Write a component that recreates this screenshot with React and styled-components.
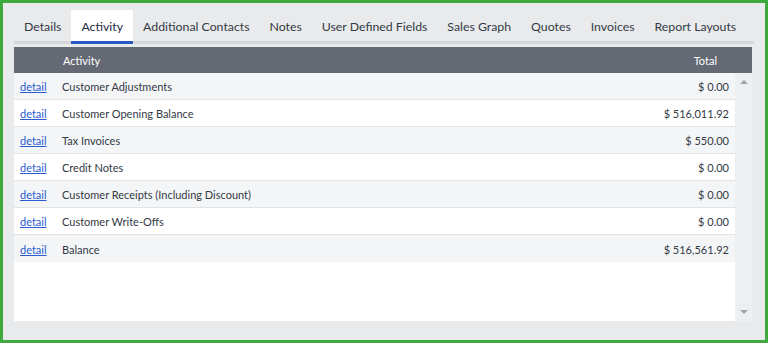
import React from 'react';
import styled, { createGlobalStyle } from 'styled-components';

const GlobalStyle = createGlobalStyle`
  html, body {
    margin: 0;
    padding: 0;
  }
  body {
    font-family: Lato, "Open Sans", sans-serif;
  }
  * {
    box-sizing: border-box;
  }
`;

const Frame = styled.div`
  width: 768px;
  height: 343px;
  border: 3px solid #3fa83f;
  background: #e9eaeb;
  padding: 7px 10px 0 11px;
  display: flex;
  flex-direction: column;
`;

const TabStrip = styled.div`
  display: flex;
  height: 34px;
  border-bottom: 3px solid #d6d7d9;
  width: 740px;
`;

const Tab = styled.div`
  height: 34px;
  margin-bottom: -3px;
  padding: 1px 10px 0;
  display: flex;
  align-items: center;
  font-size: 12.3px;
  color: ${p => (p.$active ? '#1f2a44' : '#333a46')};
  background: ${p => (p.$active ? '#ffffff' : 'transparent')};
  border-bottom: 3px solid ${p => (p.$active ? '#2957c4' : 'transparent')};
  white-space: nowrap;
`;

const Grid = styled.div`
  margin-top: 3px;
  width: 738px;
  display: flex;
  flex-direction: column;
`;

const Header = styled.div`
  height: 26px;
  background: #656973;
  color: #ffffff;
  display: flex;
  align-items: center;
  font-size: 11px;
  padding-right: 35px;
`;

const HeadCell = styled.div`
  flex: ${p => (p.$grow ? 1 : 'none')};
  width: ${p => p.$w || 'auto'};
  text-align: ${p => p.$align || 'left'};
`;

const Body = styled.div`
  height: 248px;
  display: flex;
  background: #ffffff;
`;

const Rows = styled.div`
  flex: 1;
  display: flex;
  flex-direction: column;
`;

const Row = styled.div`
  height: 27px;
  display: flex;
  align-items: center;
  padding-top: 1px;
  font-size: 11px;
  color: #333a46;
  background: ${p => (p.$odd ? '#f4f5f7' : '#ffffff')};
  border-bottom: 1px solid #e2e3e5;
  padding-right: 6px;
  &:last-child {
    border-bottom: none;
  }
`;

const DetailLink = styled.a`
  width: 48px;
  padding-left: 6px;
  color: #2a5ccf;
  text-decoration: underline;
  cursor: pointer;
`;

const Desc = styled.div`
  flex: 1;
`;

const Amount = styled.div`
  text-align: right;
`;

const ScrollTrack = styled.div`
  width: 17px;
  background: #eeeff0;
  display: flex;
  flex-direction: column;
  justify-content: space-between;
  align-items: center;
  padding: 7px 0 7px;
`;

const Arrow = styled.div`
  width: 0;
  height: 0;
  border-left: 4px solid transparent;
  border-right: 4px solid transparent;
  ${p =>
    p.$down
      ? 'border-top: 4px solid #a3a4a6;'
      : 'border-bottom: 4px solid #a3a4a6;'}
`;

const tabs = [
  'Details',
  'Activity',
  'Additional Contacts',
  'Notes',
  'User Defined Fields',
  'Sales Graph',
  'Quotes',
  'Invoices',
  'Report Layouts',
];

const rows = [
  ['Customer Adjustments', '$ 0.00'],
  ['Customer Opening Balance', '$ 516,011.92'],
  ['Tax Invoices', '$ 550.00'],
  ['Credit Notes', '$ 0.00'],
  ['Customer Receipts (Including Discount)', '$ 0.00'],
  ['Customer Write-Offs', '$ 0.00'],
  ['Balance', '$ 516,561.92'],
];

export default function App() {
  return (
    <>
      <GlobalStyle />
      <Frame>
        <TabStrip>
          {tabs.map(t => (
            <Tab key={t} $active={t === 'Activity'}>
              {t}
            </Tab>
          ))}
        </TabStrip>
        <Grid>
          <Header>
            <HeadCell $w="49px" />
            <HeadCell $grow>Activity</HeadCell>
            <HeadCell $align="right">Total</HeadCell>
          </Header>
          <Body>
            <Rows>
              {rows.map(([label, total], i) => (
                <Row key={label} $odd={i % 2 === 0}>
                  <DetailLink>detail</DetailLink>
                  <Desc>{label}</Desc>
                  <Amount>{total}</Amount>
                </Row>
              ))}
            </Rows>
            <ScrollTrack>
              <Arrow />
              <Arrow $down />
            </ScrollTrack>
          </Body>
        </Grid>
      </Frame>
    </>
  );
}
